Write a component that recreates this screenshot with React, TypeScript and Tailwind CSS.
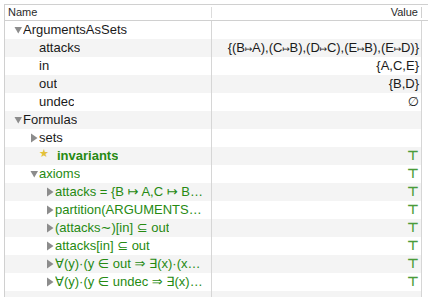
import React from 'react';

type Row = {
  level: number;
  label?: string;
  toggle?: 'open' | 'closed';
  value?: string;
  green?: boolean;
  star?: boolean;
};

const rows: Row[] = [
  { level: 0, toggle: 'open', label: 'ArgumentsAsSets' },
  { level: 1, label: 'attacks', value: '{(B↦A),(C↦B),(D↦C),(E↦B),(E↦D)}' },
  { level: 1, label: 'in', value: '{A,C,E}' },
  { level: 1, label: 'out', value: '{B,D}' },
  { level: 1, label: 'undec', value: '∅' },
  { level: 0, toggle: 'open', label: 'Formulas' },
  { level: 1, toggle: 'closed', label: 'sets' },
  { level: 1, star: true, label: 'invariants', green: true, value: '⊤' },
  { level: 1, toggle: 'open', label: 'axioms', green: true, value: '⊤' },
  { level: 2, toggle: 'closed', label: 'attacks = {B ↦ A,C ↦ B,D ↦ C,E ↦ B,E ↦ D}', green: true, value: '⊤' },
  { level: 2, toggle: 'closed', label: 'partition(ARGUMENTS,in,out,undec)', green: true, value: '⊤' },
  { level: 2, toggle: 'closed', label: '(attacks∼)[in] ⊆ out', green: true, value: '⊤' },
  { level: 2, toggle: 'closed', label: 'attacks[in] ⊆ out', green: true, value: '⊤' },
  { level: 2, toggle: 'closed', label: '∀(y)·(y ∈ out ⇒ ∃(x)·(x ↦ y ∈ attacks ∧ x ∈ in))', green: true, value: '⊤' },
  { level: 2, toggle: 'closed', label: '∀(y)·(y ∈ undec ⇒ ∃(x)·(x ↦ y ∈ attacks ∧ x ∈ undec))', green: true, value: '⊤' },
  { level: 0 },
];

const indent = ['pl-[9px]', 'pl-[25px]', 'pl-[41px]'];

const Triangle = ({ open }: { open: boolean }) =>
  open ? (
    <svg width="9" height="8" viewBox="0 0 9 8" className="shrink-0">
      <path d="M0.5 1 L8 1 L4.25 7.5 Z" fill="#8c8c8c" />
    </svg>
  ) : (
    <svg width="9" height="10" viewBox="0 0 9 10" className="shrink-0">
      <path d="M1 0.5 L7.5 5 L1 9.5 Z" fill="#8c8c8c" />
    </svg>
  );

// the value column draws the maplet arrow small and tight
const Value = ({ text }: { text: string }) => {
  const parts = text.split('↦');
  return (
    <>
      {parts.map((p, i) => (
        <React.Fragment key={i}>
          {i > 0 && <span className="text-[9px] tracking-[-0.5px]">↦</span>}
          {p}
        </React.Fragment>
      ))}
    </>
  );
};

const TreeRow = ({ row, index }: { row: Row; index: number }) => {
  const bg = index % 2 === 1 ? 'bg-[#f4f4f4]' : 'bg-white';
  return (
    <div className={`flex h-[18px] ${bg}`}>
      <div className={`flex items-center w-[207px] shrink-0 border-r border-[#d6d6d6] pr-[7px] overflow-hidden ${indent[row.level]}`}>
        {row.label && (
          <>
            {row.toggle ? <Triangle open={row.toggle === 'open'} /> : <span className="w-[9px] shrink-0" />}
            {row.star && (
              <span className="w-[18px] shrink-0 self-start pt-[1px] text-[11px] leading-[11px] text-[#e3c13a] font-['DejaVu_Sans',sans-serif]">★</span>
            )}
            <span
              className={`truncate text-[13px] leading-[18px] ${row.green ? 'text-[#268a12]' : 'text-[#1a1a1a]'} ${row.star ? 'font-bold' : ''}`}
            >
              {row.label}
            </span>
          </>
        )}
      </div>
      <div className="flex items-center justify-end w-[210px] shrink-0 border-r border-[#d6d6d6] pr-[2px] overflow-hidden whitespace-nowrap">
        {row.value && (
          <span
            className={`text-[13px] leading-[18px] ${row.value === '⊤' ? 'font-bold text-[#4a9c3a]' : 'text-[#1a1a1a]'}`}
          >
            <Value text={row.value} />
          </span>
        )}
      </div>
      <div className="flex-1 bg-white" />
    </div>
  );
};

export default function App() {
  return (
    <div className="w-[428px] h-[297px] overflow-hidden bg-white pl-[4px] pt-[4px] font-['Liberation_Sans','DejaVu_Sans',sans-serif]">
      <div className="border-l border-t border-[#d0d0d0] h-full">
        <div className="flex h-[16px] border-b border-[#d0d0d0] text-[11px] text-[#2a2a2a]">
          <div className="flex items-center justify-between w-[207px] shrink-0 pl-[3px]">
            <span>Name</span>
            <span className="w-px h-[11px] bg-[#dcdcdc]" />
          </div>
          <div className="flex items-center justify-end w-[210px] shrink-0 gap-[3px]">
            <span>Value</span>
            <span className="w-px h-[11px] bg-[#d0d0d0]" />
          </div>
        </div>
        {rows.map((row, i) => (
          <TreeRow key={i} row={row} index={i} />
        ))}
      </div>
    </div>
  );
}
